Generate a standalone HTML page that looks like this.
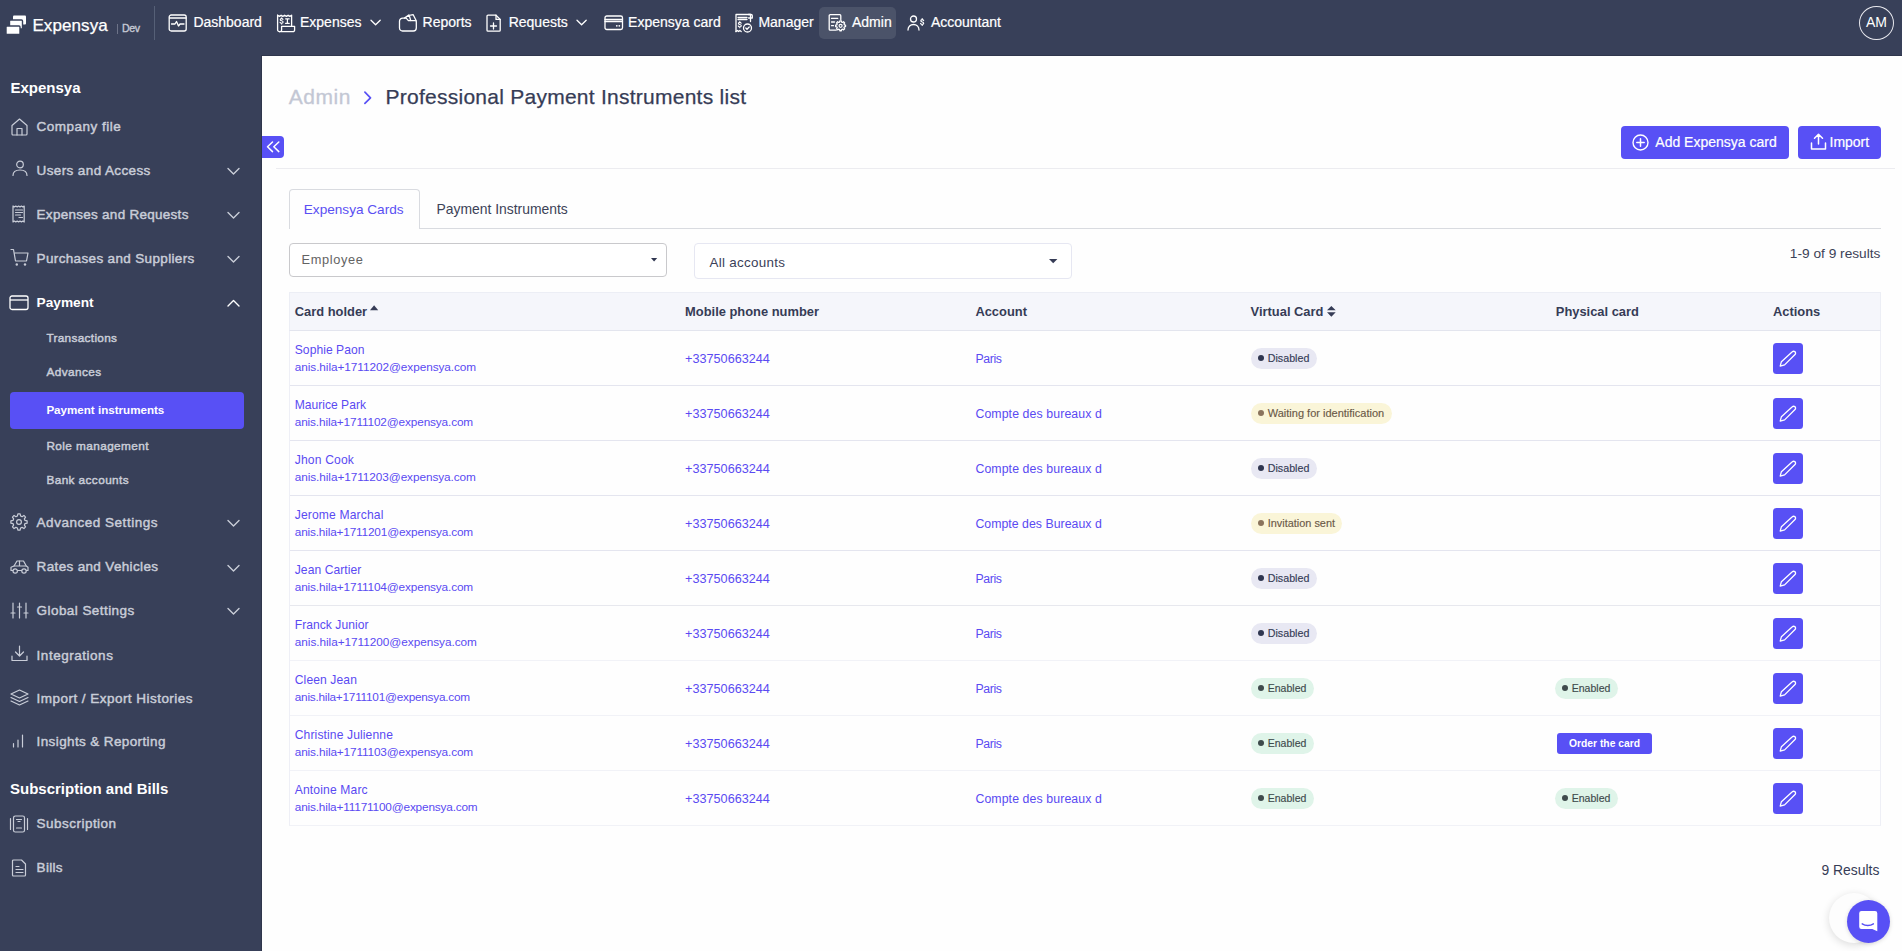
<!DOCTYPE html>
<html><head><meta charset="utf-8"><title>Professional Payment Instruments list</title>
<style>
html,body{margin:0;padding:0;}
body{width:1902px;height:951px;overflow:hidden;position:relative;background:#fefefe;font-family:"Liberation Sans", sans-serif;}
.t{position:absolute;line-height:1;white-space:nowrap;}
.b{position:absolute;box-sizing:border-box;}
.i{position:absolute;overflow:visible;}
</style></head><body>
<div class="b" style="left:0px;top:0px;width:1902px;height:56px;background:#384059;"></div>
<div class="b" style="left:261px;top:55px;width:1641px;height:1px;background:#2f364c;"></div>
<svg class="i" style="left:5px;top:14px;" width="22" height="22" viewBox="0 0 22 22" fill="none"><rect x="8" y="1.5" width="13" height="9" rx="1" fill="#fff"/><rect x="4.5" y="6" width="13" height="9" rx="1" fill="#fff" stroke="#384059" stroke-width="1.4"/><rect x="1" y="12" width="14" height="8.5" rx="1" fill="#fff" stroke="#384059" stroke-width="1.4"/></svg>
<div class="t" style="left:32.40px;top:17.11px;font-size:17px;color:#ffffff;font-weight:400;letter-spacing:0.1px;-webkit-text-stroke:0.25px #fff;">Expensya</div>
<div class="b" style="left:117px;top:23.5px;width:1px;height:10.5px;background:#6d7388;"></div>
<div class="t" style="left:122.00px;top:23.03px;font-size:10.6px;color:#c5c9d4;font-weight:400;letter-spacing:-0.375px;-webkit-text-stroke:0.35px #c5c9d4;">Dev</div>
<div class="b" style="left:154px;top:6px;width:1px;height:34px;background:#566077;"></div>
<div class="b" style="left:819px;top:7px;width:77px;height:32px;background:#4b5369;border-radius:5px;"></div>
<svg class="i" style="left:168px;top:14px;" width="20" height="18" viewBox="0 0 20 18" fill="none"><rect x="1.2" y="1" width="17" height="16" rx="2" stroke="#fff" stroke-width="1.3" stroke-linecap="round" stroke-linejoin="round"/><path d="M1.5 4h16.5" stroke="#fff" stroke-width="1.3" stroke-linecap="round" stroke-linejoin="round"/><path d="M3.5 10h3.5l1.5-2.5 2 4.5 1.5-2h4" stroke="#fff" stroke-width="1.3" stroke-linecap="round" stroke-linejoin="round"/></svg>
<div class="t" style="left:193.40px;top:15.35px;font-size:14px;color:#ffffff;font-weight:400;-webkit-text-stroke:0.2px #fff;">Dashboard</div>
<svg class="i" style="left:276px;top:13px;" width="20" height="20" viewBox="0 0 20 20" fill="none"><path d="M1.6 2.2l1.75 1.2 1.75-1.2 1.75 1.2 1.75-1.2 1.75 1.2 1.75-1.2 1.75 1.2 1.75-1.2V13.3" stroke="#fff" stroke-width="1.3" stroke-linecap="round" stroke-linejoin="round"/><path d="M1.6 2.2V16.8a1.9 1.9 0 0 0 1.9 1.9" stroke="#fff" stroke-width="1.3" stroke-linecap="round" stroke-linejoin="round"/><path d="M3.5 18.7h13.3a1.8 1.8 0 0 0 1.8-1.8v-3.6H5.6v3.6a1.8 1.8 0 0 1-1.8 1.8" stroke="#fff" stroke-width="1.3" stroke-linecap="round" stroke-linejoin="round"/><path d="M7 6.4c-.3-.5-.8-.8-1.4-.8-.8 0-1.4.4-1.4 1.1 0 1.4 2.9.8 2.9 2.3 0 .7-.7 1.2-1.5 1.2-.7 0-1.3-.3-1.6-.9M5.7 4.7v.9M5.7 10.2v.9" stroke="#fff" stroke-width="1.1" stroke-linecap="round"/><path d="M9.6 5.8h3.6M9.6 10.4h3.6M11.4 5.8v4.6" stroke="#fff" stroke-width="1.2" stroke-linecap="round"/></svg>
<div class="t" style="left:300.00px;top:15.35px;font-size:14px;color:#ffffff;font-weight:400;-webkit-text-stroke:0.2px #fff;">Expenses</div>
<svg class="i" style="left:369.5px;top:19px;" width="12" height="8" viewBox="0 0 12 8" fill="none"><path d="M1 1.2l4.6 4.6 4.6-4.6" stroke="#fff" stroke-width="1.3" stroke-linecap="round" stroke-linejoin="round"/></svg>
<svg class="i" style="left:398px;top:13px;" width="20" height="19" viewBox="0 0 20 19" fill="none"><path d="M1.5 8.3a3.2 3.2 0 0 1 3.2-3.2H8.2l2.2 2.5H17.3a1 1 0 0 1 1 1V15a3 3 0 0 1-3 3H4.5a3 3 0 0 1-3-3z" stroke="#fff" stroke-width="1.3" stroke-linecap="round" stroke-linejoin="round"/><path d="M6.5 5.1l4.6-3.2 1.6 5.6M12.6 2.2l2.6-.5 3 6" stroke="#fff" stroke-width="1.3" stroke-linecap="round" stroke-linejoin="round"/></svg>
<div class="t" style="left:422.60px;top:15.35px;font-size:14px;color:#ffffff;font-weight:400;-webkit-text-stroke:0.2px #fff;">Reports</div>
<svg class="i" style="left:486px;top:14px;" width="16" height="18" viewBox="0 0 16 18" fill="none"><path d="M2 1.2h8l4.2 4.2v10.8a1 1 0 0 1-1 1H2a1 1 0 0 1-1-1V2.2a1 1 0 0 1 1-1z" stroke="#fff" stroke-width="1.3" stroke-linecap="round" stroke-linejoin="round"/><path d="M10 1.2v4.2h4.2" stroke="#fff" stroke-width="1.3" stroke-linecap="round" stroke-linejoin="round"/><path d="M7.5 9v6M4.5 12h6" stroke="#fff" stroke-width="1.3" stroke-linecap="round" stroke-linejoin="round"/></svg>
<div class="t" style="left:508.70px;top:15.35px;font-size:14px;color:#ffffff;font-weight:400;-webkit-text-stroke:0.2px #fff;">Requests</div>
<svg class="i" style="left:575.5px;top:19px;" width="12" height="8" viewBox="0 0 12 8" fill="none"><path d="M1 1.2l4.6 4.6 4.6-4.6" stroke="#fff" stroke-width="1.3" stroke-linecap="round" stroke-linejoin="round"/></svg>
<svg class="i" style="left:604px;top:15px;" width="20" height="15" viewBox="0 0 20 15" fill="none"><rect x="1" y="1" width="17.5" height="13.5" rx="1.8" stroke="#fff" stroke-width="1.3" stroke-linecap="round" stroke-linejoin="round"/><path d="M1 4.5h17.5M1 6.5h17.5" stroke="#fff" stroke-width="1.3" stroke-linecap="round" stroke-linejoin="round"/><circle cx="12.8" cy="10.8" r="0.9" fill="#fff"/><circle cx="15.3" cy="10.8" r="0.9" fill="#fff"/></svg>
<div class="t" style="left:628.10px;top:15.35px;font-size:14px;color:#ffffff;font-weight:400;-webkit-text-stroke:0.2px #fff;">Expensya card</div>
<svg class="i" style="left:734px;top:13px;" width="20" height="20" viewBox="0 0 20 20" fill="none"><path d="M2 18.5V1.5h14.5v7" stroke="#fff" stroke-width="1.3" stroke-linecap="round" stroke-linejoin="round"/><path d="M14.5 1.5h2.5a1.3 1.3 0 0 1 1.3 1.3V5h-3.8" stroke="#fff" stroke-width="1.3" stroke-linecap="round" stroke-linejoin="round"/><path d="M4 4.5h9M4 6.5h9" stroke="#fff" stroke-width="1.3" stroke-linecap="round" stroke-linejoin="round"/><path d="M2 18.5l1.3-1 1.3 1 1.3-1 1.3 1" stroke="#fff" stroke-width="1.3" stroke-linecap="round" stroke-linejoin="round"/><circle cx="13.5" cy="15" r="4" stroke="#fff" stroke-width="1.3" stroke-linecap="round" stroke-linejoin="round"/><path d="M11.8 15l1.2 1.2 2.2-2.2" stroke="#fff" stroke-width="1.3" stroke-linecap="round" stroke-linejoin="round"/><path d="M7.2 10.2c-.3-.5-.8-.8-1.4-.8-.8 0-1.4.4-1.4 1 0 1.4 2.9.8 2.9 2.3 0 .7-.7 1.1-1.5 1.1-.7 0-1.3-.3-1.6-.9M5.8 8.5v.9M5.8 13.8v.9" stroke="#fff" stroke-width="1.1" stroke-linecap="round"/></svg>
<div class="t" style="left:758.40px;top:15.35px;font-size:14px;color:#ffffff;font-weight:400;-webkit-text-stroke:0.2px #fff;">Manager</div>
<svg class="i" style="left:828px;top:14px;" width="19" height="18" viewBox="0 0 19 18" fill="none"><path d="M8.2 16.2H2.2a1 1 0 0 1-1-1V1.7a1 1 0 0 1 1-1h9.6a1 1 0 0 1 1 1V5.5" stroke="#fff" stroke-width="1.3" stroke-linecap="round" stroke-linejoin="round"/><path d="M3.5 4.4h6.2M3.5 8h3M3.5 11.7h2" stroke="#fff" stroke-width="1.3" stroke-linecap="round" stroke-linejoin="round"/><path d="M11.59 8.03 L11.82 6.86 L13.38 6.86 L13.61 8.03 L14.55 8.42 L15.54 7.75 L16.65 8.86 L15.98 9.85 L16.37 10.79 L17.54 11.02 L17.54 12.58 L16.37 12.81 L15.98 13.75 L16.65 14.74 L15.54 15.85 L14.55 15.18 L13.61 15.57 L13.38 16.74 L11.82 16.74 L11.59 15.57 L10.65 15.18 L9.66 15.85 L8.55 14.74 L9.22 13.75 L8.83 12.81 L7.66 12.58 L7.66 11.02 L8.83 10.79 L9.22 9.85 L8.55 8.86 L9.66 7.75 L10.65 8.42Z" stroke="#fff" stroke-width="1.3" stroke-linejoin="round" fill="#4b5369"/><circle cx="12.6" cy="11.8" r="1.5" stroke="#fff" stroke-width="1.2"/></svg>
<div class="t" style="left:852.00px;top:15.35px;font-size:14px;color:#ffffff;font-weight:400;-webkit-text-stroke:0.2px #fff;">Admin</div>
<svg class="i" style="left:907px;top:15px;" width="18" height="16" viewBox="0 0 18 16" fill="none"><circle cx="6.5" cy="4" r="3" stroke="#fff" stroke-width="1.3" stroke-linecap="round" stroke-linejoin="round"/><path d="M1 15c0-3.2 2.4-5.5 5.5-5.5s5.5 2.3 5.5 5.5" stroke="#fff" stroke-width="1.3" stroke-linecap="round" stroke-linejoin="round"/><path d="M16.6 5.6c-.3-.6-.8-.9-1.4-.9-.8 0-1.4.5-1.4 1.1 0 1.5 2.9.8 2.9 2.4 0 .7-.7 1.2-1.5 1.2-.7 0-1.3-.4-1.6-.9M15.2 3.6v1M15.2 9.4v1" stroke="#fff" stroke-width="1.2" stroke-linecap="round"/></svg>
<div class="t" style="left:930.90px;top:15.35px;font-size:14px;color:#ffffff;font-weight:400;-webkit-text-stroke:0.2px #fff;">Accountant</div>
<div class="b" style="left:1859px;top:5.8px;width:35px;height:34.400000000000006px;border:1.3px solid #e8e8ee;border-radius:50%;"></div>
<div class="t" style="left:1876.50px;top:15.15px;font-size:14px;color:#ffffff;font-weight:400;transform:translateX(-50%);">AM</div><div class="b" style="left:0px;top:56px;width:262px;height:895px;background:#384059;"></div>
<div class="b" style="left:261px;top:56px;width:1px;height:895px;background:#2f364c;"></div>
<div class="t" style="left:10.50px;top:79.60px;font-size:15px;color:#ffffff;font-weight:700;">Expensya</div>
<svg class="i" style="left:11px;top:118px;" width="17" height="18" viewBox="0 0 17 18" fill="none"><path d="M1 7.5L8.5 1 16 7.5v8.5a1 1 0 0 1-1 1H2a1 1 0 0 1-1-1z" stroke="#c9cdd8" stroke-width="1.2" stroke-linecap="round" stroke-linejoin="round"/><path d="M6 17v-6.5h5V17" stroke="#c9cdd8" stroke-width="1.2" stroke-linecap="round" stroke-linejoin="round"/></svg>
<div class="t" style="left:36.60px;top:120.37px;font-size:13.5px;color:#c9cdd8;font-weight:400;letter-spacing:0.492px;-webkit-text-stroke:0.45px #c9cdd8;">Company file</div>
<svg class="i" style="left:12px;top:160px;" width="16" height="16" viewBox="0 0 16 16" fill="none"><circle cx="8" cy="4.5" r="3.3" stroke="#c9cdd8" stroke-width="1.2" stroke-linecap="round" stroke-linejoin="round"/><path d="M1 15.5c0-3.5 3-5.5 7-5.5s7 2 7 5.5" stroke="#c9cdd8" stroke-width="1.2" stroke-linecap="round" stroke-linejoin="round"/></svg>
<div class="t" style="left:36.60px;top:163.57px;font-size:13.5px;color:#c9cdd8;font-weight:400;letter-spacing:0.377px;-webkit-text-stroke:0.45px #c9cdd8;">Users and Access</div>
<svg class="i" style="left:226.5px;top:167px;" width="13" height="9" viewBox="0 0 13 9" fill="none"><path d="M1 1.5l5.5 5.5L12 1.5" stroke="#c9cdd8" stroke-width="1.4" stroke-linecap="round" stroke-linejoin="round"/></svg>
<svg class="i" style="left:12px;top:205px;" width="14" height="18" viewBox="0 0 14 18" fill="none"><path d="M1 1v16l1.4-1 1.4 1 1.4-1 1.4 1 1.4-1 1.4 1 1.4-1 1.4 1V1l-1.4 1-1.4-1-1.4 1-1.4-1-1.4 1-1.4-1-1.4 1z" stroke="#c9cdd8" stroke-width="1.2" stroke-linecap="round" stroke-linejoin="round"/><path d="M3.5 5h7M3.5 7.5h7M3.5 10h5M7 12.5h3.5" stroke="#c9cdd8" stroke-width="1.2" stroke-linecap="round" stroke-linejoin="round"/></svg>
<div class="t" style="left:36.60px;top:207.57px;font-size:13.5px;color:#c9cdd8;font-weight:400;letter-spacing:0.273px;-webkit-text-stroke:0.45px #c9cdd8;">Expenses and Requests</div>
<svg class="i" style="left:226.5px;top:211px;" width="13" height="9" viewBox="0 0 13 9" fill="none"><path d="M1 1.5l5.5 5.5L12 1.5" stroke="#c9cdd8" stroke-width="1.4" stroke-linecap="round" stroke-linejoin="round"/></svg>
<svg class="i" style="left:10px;top:248px;" width="19" height="19" viewBox="0 0 19 19" fill="none"><path d="M1 1.5h2.5l2 11.5h11l1.5-8H5" stroke="#c9cdd8" stroke-width="1.2" stroke-linecap="round" stroke-linejoin="round"/><circle cx="6.8" cy="16.5" r="1.2" fill="#c9cdd8"/><circle cx="15" cy="16.5" r="1.2" fill="#c9cdd8"/></svg>
<div class="t" style="left:36.60px;top:251.57px;font-size:13.5px;color:#c9cdd8;font-weight:400;letter-spacing:0.346px;-webkit-text-stroke:0.45px #c9cdd8;">Purchases and Suppliers</div>
<svg class="i" style="left:226.5px;top:255px;" width="13" height="9" viewBox="0 0 13 9" fill="none"><path d="M1 1.5l5.5 5.5L12 1.5" stroke="#c9cdd8" stroke-width="1.4" stroke-linecap="round" stroke-linejoin="round"/></svg>
<svg class="i" style="left:9px;top:295px;" width="20" height="16" viewBox="0 0 20 16" fill="none"><rect x="1" y="1" width="18" height="13.5" rx="2" stroke="#fff" stroke-width="1.3"/><path d="M1 5h18" stroke="#fff" stroke-width="1.3"/></svg>
<div class="t" style="left:36.60px;top:295.90px;font-size:13.7px;color:#ffffff;font-weight:700;">Payment</div>
<svg class="i" style="left:226.5px;top:298.5px;" width="13" height="9" viewBox="0 0 13 9" fill="none"><path d="M1 7l5.5-5.5L12 7" stroke="#fff" stroke-width="1.4" stroke-linecap="round" stroke-linejoin="round"/></svg>
<div class="b" style="left:10px;top:392px;width:234px;height:37px;background:#5850f5;border-radius:4px;"></div>
<div class="t" style="left:46.40px;top:333.21px;font-size:11.8px;color:#c9cdd8;font-weight:400;letter-spacing:0.317px;-webkit-text-stroke:0.45px #c9cdd8;">Transactions</div>
<div class="t" style="left:46.40px;top:367.11px;font-size:11.8px;color:#c9cdd8;font-weight:400;letter-spacing:0.425px;-webkit-text-stroke:0.45px #c9cdd8;">Advances</div>
<div class="t" style="left:46.40px;top:404.18px;font-size:11.6px;color:#fff;font-weight:700;">Payment instruments</div>
<div class="t" style="left:46.40px;top:441.11px;font-size:11.8px;color:#c9cdd8;font-weight:400;letter-spacing:0.412px;-webkit-text-stroke:0.45px #c9cdd8;">Role management</div>
<div class="t" style="left:46.40px;top:474.61px;font-size:11.8px;color:#c9cdd8;font-weight:400;letter-spacing:0.408px;-webkit-text-stroke:0.45px #c9cdd8;">Bank accounts</div>
<svg class="i" style="left:10px;top:513px;" width="18" height="18" viewBox="0 0 18 18" fill="none"><path d="M7.40 3.01 L7.86 0.88 L10.14 0.88 L10.60 3.01 L12.10 3.63 L13.93 2.45 L15.55 4.07 L14.37 5.90 L14.99 7.40 L17.12 7.86 L17.12 10.14 L14.99 10.60 L14.37 12.10 L15.55 13.93 L13.93 15.55 L12.10 14.37 L10.60 14.99 L10.14 17.12 L7.86 17.12 L7.40 14.99 L5.90 14.37 L4.07 15.55 L2.45 13.93 L3.63 12.10 L3.01 10.60 L0.88 10.14 L0.88 7.86 L3.01 7.40 L3.63 5.90 L2.45 4.07 L4.07 2.45 L5.90 3.63Z" stroke="#c9cdd8" stroke-width="1.2" stroke-linecap="round" stroke-linejoin="round"/><circle cx="9" cy="9" r="2.4" stroke="#c9cdd8" stroke-width="1.2" stroke-linecap="round" stroke-linejoin="round"/></svg>
<div class="t" style="left:36.60px;top:515.97px;font-size:13.5px;color:#c9cdd8;font-weight:400;letter-spacing:0.520px;-webkit-text-stroke:0.45px #c9cdd8;">Advanced Settings</div>
<svg class="i" style="left:226.5px;top:519.4px;" width="13" height="9" viewBox="0 0 13 9" fill="none"><path d="M1 1.5l5.5 5.5L12 1.5" stroke="#c9cdd8" stroke-width="1.4" stroke-linecap="round" stroke-linejoin="round"/></svg>
<svg class="i" style="left:9.5px;top:560px;" width="19" height="15" viewBox="0 0 19 15" fill="none"><path d="M1 10.5V7.2l3-1.2 3-5h6.5l2.8 5 1.7 1.2v3.3z" stroke="#c9cdd8" stroke-width="1.2" stroke-linecap="round" stroke-linejoin="round"/><path d="M4 6h12M9.5 1.2V6" stroke="#c9cdd8" stroke-width="1.2" stroke-linecap="round" stroke-linejoin="round"/><circle cx="5.2" cy="11" r="2.2" fill="#384059" stroke="#c9cdd8" stroke-width="1.2" stroke-linecap="round" stroke-linejoin="round"/><circle cx="14" cy="11" r="2.2" fill="#384059" stroke="#c9cdd8" stroke-width="1.2" stroke-linecap="round" stroke-linejoin="round"/></svg>
<div class="t" style="left:36.60px;top:560.27px;font-size:13.5px;color:#c9cdd8;font-weight:400;letter-spacing:0.343px;-webkit-text-stroke:0.45px #c9cdd8;">Rates and Vehicles</div>
<svg class="i" style="left:226.5px;top:563.7px;" width="13" height="9" viewBox="0 0 13 9" fill="none"><path d="M1 1.5l5.5 5.5L12 1.5" stroke="#c9cdd8" stroke-width="1.4" stroke-linecap="round" stroke-linejoin="round"/></svg>
<svg class="i" style="left:10px;top:602px;" width="19" height="17" viewBox="0 0 19 17" fill="none"><path d="M3 1v15M9.5 1v15M16 1v15" stroke="#c9cdd8" stroke-width="1.2" stroke-linecap="round" stroke-linejoin="round"/><path d="M1 11h4M7.5 5h4M14 11h4" stroke="#c9cdd8" stroke-width="1.2" stroke-linecap="round" stroke-linejoin="round"/></svg>
<div class="t" style="left:36.60px;top:603.97px;font-size:13.5px;color:#c9cdd8;font-weight:400;letter-spacing:0.432px;-webkit-text-stroke:0.45px #c9cdd8;">Global Settings</div>
<svg class="i" style="left:226.5px;top:607.4px;" width="13" height="9" viewBox="0 0 13 9" fill="none"><path d="M1 1.5l5.5 5.5L12 1.5" stroke="#c9cdd8" stroke-width="1.4" stroke-linecap="round" stroke-linejoin="round"/></svg>
<svg class="i" style="left:11px;top:645px;" width="17" height="17" viewBox="0 0 17 17" fill="none"><path d="M8.5 1v10M4.5 7l4 4 4-4" stroke="#c9cdd8" stroke-width="1.2" stroke-linecap="round" stroke-linejoin="round"/><path d="M1 11v4.5h15V11" stroke="#c9cdd8" stroke-width="1.2" stroke-linecap="round" stroke-linejoin="round"/></svg>
<div class="t" style="left:36.60px;top:648.57px;font-size:13.5px;color:#c9cdd8;font-weight:400;letter-spacing:0.523px;-webkit-text-stroke:0.45px #c9cdd8;">Integrations</div>
<svg class="i" style="left:10px;top:689px;" width="19" height="17" viewBox="0 0 19 17" fill="none"><path d="M9.5 1L1 5l8.5 4L18 5z" stroke="#c9cdd8" stroke-width="1.2" stroke-linecap="round" stroke-linejoin="round"/><path d="M1 8.5l8.5 4 8.5-4M1 12l8.5 4 8.5-4" stroke="#c9cdd8" stroke-width="1.2" stroke-linecap="round" stroke-linejoin="round"/></svg>
<div class="t" style="left:36.60px;top:692.37px;font-size:13.5px;color:#c9cdd8;font-weight:400;letter-spacing:0.463px;-webkit-text-stroke:0.45px #c9cdd8;">Import / Export Histories</div>
<svg class="i" style="left:12px;top:734px;" width="12" height="14" viewBox="0 0 12 14" fill="none"><path d="M1.5 13V9.5M6 13V6M10.5 13V1" stroke="#c9cdd8" stroke-width="1.2" stroke-linecap="round" stroke-linejoin="round"/></svg>
<div class="t" style="left:36.60px;top:735.27px;font-size:13.5px;color:#c9cdd8;font-weight:400;letter-spacing:0.381px;-webkit-text-stroke:0.45px #c9cdd8;">Insights &amp; Reporting</div>
<div class="t" style="left:10.00px;top:781.30px;font-size:15px;color:#ffffff;font-weight:700;">Subscription and Bills</div>
<svg class="i" style="left:9px;top:815px;" width="20" height="18" viewBox="0 0 20 18" fill="none"><rect x="4.5" y="1" width="11" height="16" rx="1.8" stroke="#c9cdd8" stroke-width="1.2" stroke-linecap="round" stroke-linejoin="round"/><path d="M1.5 3.5v11M18.5 3.5v11" stroke="#c9cdd8" stroke-width="1.2" stroke-linecap="round" stroke-linejoin="round"/><path d="M7.5 4.5h5M9 6.5h2M7.5 13h5" stroke="#c9cdd8" stroke-width="1.2" stroke-linecap="round" stroke-linejoin="round"/></svg>
<div class="t" style="left:36.60px;top:817.27px;font-size:13.5px;color:#c9cdd8;font-weight:400;letter-spacing:0.473px;-webkit-text-stroke:0.45px #c9cdd8;">Subscription</div>
<svg class="i" style="left:12px;top:859px;" width="15" height="18" viewBox="0 0 15 18" fill="none"><path d="M1.5 1h8l4 4v11a1 1 0 0 1-1 1h-11a1 1 0 0 1-1-1V2a1 1 0 0 1 1-1z" stroke="#c9cdd8" stroke-width="1.2" stroke-linecap="round" stroke-linejoin="round"/><path d="M4 7.5h3M4 10.5h7M4 13.5h7" stroke="#c9cdd8" stroke-width="1.2" stroke-linecap="round" stroke-linejoin="round"/></svg>
<div class="t" style="left:36.60px;top:861.37px;font-size:13.5px;color:#c9cdd8;font-weight:400;letter-spacing:0.287px;-webkit-text-stroke:0.45px #c9cdd8;">Bills</div><div class="t" style="left:288.80px;top:86.22px;font-size:21px;color:#c3c7d4;font-weight:400;letter-spacing:0.518px;-webkit-text-stroke:0.3px #c3c7d4;">Admin</div>
<svg class="i" style="left:363px;top:90px;" width="10" height="15" viewBox="0 0 10 15" fill="none"><path d="M1.9 2.2l5.6 5.6-5.6 5.6" stroke="#5850f5" stroke-width="1.7" stroke-linecap="round" stroke-linejoin="round"/></svg>
<div class="t" style="left:385.50px;top:86.22px;font-size:21px;color:#363c56;font-weight:400;letter-spacing:0.255px;-webkit-text-stroke:0.25px #363c56;">Professional Payment Instruments list</div>
<div class="b" style="left:262px;top:136px;width:22px;height:22px;background:#5850f5;border-radius:0 4px 4px 0;"></div>
<svg class="i" style="left:266px;top:141px;" width="15" height="12" viewBox="0 0 15 12" fill="none"><path d="M6.5 1L1.5 5.8l5 4.8M12.8 1l-5 4.8 5 4.8" stroke="#fff" stroke-width="1.5" stroke-linecap="round" stroke-linejoin="round"/></svg>
<div class="b" style="left:276px;top:168px;width:1619px;height:1px;background:#ececf0;"></div>
<div class="b" style="left:1621px;top:126px;width:168px;height:33px;background:#5850f5;border-radius:4px;"></div>
<svg class="i" style="left:1632px;top:134px;" width="17" height="17" viewBox="0 0 17 17" fill="none"><circle cx="8.5" cy="8.5" r="7.5" stroke="#fff" stroke-width="1.4"/><path d="M8.5 4.8v7.4M4.8 8.5h7.4" stroke="#fff" stroke-width="1.5" stroke-linecap="round"/></svg>
<div class="t" style="left:1655.30px;top:135.45px;font-size:14px;color:#fff;font-weight:400;-webkit-text-stroke:0.2px #fff;">Add Expensya card</div>
<div class="b" style="left:1798px;top:126px;width:83px;height:33px;background:#5850f5;border-radius:4px;"></div>
<svg class="i" style="left:1810px;top:133px;" width="17" height="18" viewBox="0 0 17 18" fill="none"><path d="M8.5 11V1.5M4.5 5.2l4-4 4 4" stroke="#fff" stroke-width="1.5" stroke-linecap="round" stroke-linejoin="round"/><path d="M1.5 10v6h14v-6" stroke="#fff" stroke-width="1.5" stroke-linecap="round" stroke-linejoin="round"/></svg>
<div class="t" style="left:1829.50px;top:135.45px;font-size:14px;color:#fff;font-weight:400;-webkit-text-stroke:0.2px #fff;">Import</div>
<div class="b" style="left:289px;top:189px;width:131px;height:40px;border:1px solid #d9dbe0;border-bottom:none;border-radius:4px 4px 0 0;background:#fefefe;"></div>
<div class="b" style="left:420px;top:228px;width:1461px;height:1px;background:#d9dbe0;"></div>
<div class="t" style="left:303.80px;top:202.99px;font-size:13.6px;color:#5a4ff3;font-weight:400;">Expensya Cards</div>
<div class="t" style="left:436.50px;top:202.73px;font-size:13.9px;color:#3c4257;font-weight:400;">Payment Instruments</div>
<div class="b" style="left:289px;top:243px;width:378px;height:34px;border:1px solid #c9c9cc;border-radius:4px;background:#fff;"></div>
<div class="t" style="left:301.60px;top:253.76px;font-size:12.8px;color:#636363;font-weight:400;letter-spacing:0.611px;">Employee</div>
<svg class="i" style="left:651px;top:258px;" width="8" height="5" viewBox="0 0 8 5" fill="none"><path d="M0 0h6.2L3.1 3.4z" fill="#2f3650"/></svg>
<div class="b" style="left:694px;top:243px;width:378px;height:36px;border:1px solid #e6e7f2;border-radius:4px;background:#fff;"></div>
<div class="t" style="left:709.60px;top:255.96px;font-size:13.4px;color:#3a4058;font-weight:400;letter-spacing:0.286px;">All accounts</div>
<svg class="i" style="left:1049px;top:259px;" width="9" height="5" viewBox="0 0 9 5" fill="none"><path d="M0 0h8.4L4.2 4.3z" fill="#363c56"/></svg>
<div class="t" style="right:21.60px;top:247.20px;font-size:13.7px;color:#3c4257;font-weight:400;">1-9 of 9 results</div>
<div class="b" style="left:289px;top:292px;width:1592px;height:534px;border:1px solid #eeeff6;border-bottom-color:#f1f2f7;"></div>
<div class="b" style="left:289px;top:292px;width:1592px;height:39px;background:#f5f6fb;border:1px solid #eceef5;border-bottom:1px solid #e3e5ee;"></div>
<div class="t" style="left:294.75px;top:305.68px;font-size:12.9px;color:#363c56;font-weight:700;">Card holder</div>
<svg class="i" style="left:370px;top:305px;" width="9" height="6" viewBox="0 0 9 6" fill="none"><path d="M0 5.2h8.2L4.1 0.2z" fill="#363c56"/></svg>
<div class="t" style="left:685.10px;top:305.68px;font-size:12.9px;color:#363c56;font-weight:700;">Mobile phone number</div>
<div class="t" style="left:975.40px;top:305.68px;font-size:12.9px;color:#363c56;font-weight:700;">Account</div>
<div class="t" style="left:1250.60px;top:305.68px;font-size:12.9px;color:#363c56;font-weight:700;">Virtual Card</div>
<svg class="i" style="left:1327px;top:305.6px;" width="9" height="11" viewBox="0 0 9 11" fill="none"><path d="M0 4.3h8.7L4.35 0z M0 6.3h8.7L4.35 10.8z" fill="#363c56"/></svg>
<div class="t" style="left:1555.80px;top:305.68px;font-size:12.9px;color:#363c56;font-weight:700;">Physical card</div>
<div class="t" style="left:1773.00px;top:305.68px;font-size:12.9px;color:#363c56;font-weight:700;">Actions</div>
<div class="t" style="left:294.75px;top:343.76px;font-size:12.1px;color:#5a4af2;font-weight:400;letter-spacing:0.045px;">Sophie Paon</div>
<div class="t" style="left:294.75px;top:361.91px;font-size:11.8px;color:#5a4af2;font-weight:400;letter-spacing:-0.063px;">anis.hila+1711202@expensya.com</div>
<div class="t" style="left:685.10px;top:352.59px;font-size:12.65px;color:#5a4af2;font-weight:400;">+33750663244</div>
<div class="t" style="left:975.40px;top:352.89px;font-size:12.3px;color:#5a4af2;font-weight:400;letter-spacing:-0.381px;">Paris</div>
<div class="b" style="left:1251px;top:348.00px;height:21px;padding:0 7.5px 0 7px;border-radius:11px;background:#e8e8f3;display:flex;align-items:center;font-size:10.7px;color:#363c56;line-height:1;white-space:nowrap;"><span style="display:inline-block;width:6.2px;height:6.2px;border-radius:50%;background:#2f3650;margin-right:3.6px;position:relative;top:-0.4px;"></span><span style="position:relative;top:-0.4px;-webkit-text-stroke:0.15px #363c56;">Disabled</span></div>
<div class="b" style="left:1773px;top:343.0px;width:30px;height:31.0px;background:#5850f5;border-radius:3.5px;"></div>
<svg class="i" style="left:1778px;top:349.8px;" width="19" height="18" viewBox="0 0 19 18" fill="none"><path d="M14.3 1.8a1.9 1.9 0 0 1 2.7 2.7L6.6 14.9l-4.4 1.2 1.2-4.4z" stroke="#fff" stroke-width="1.3" stroke-linejoin="round"/></svg>
<div class="b" style="left:290px;top:385px;width:1590px;height:1px;background:#e4e5ef;"></div>
<div class="t" style="left:294.75px;top:398.76px;font-size:12.1px;color:#5a4af2;font-weight:400;letter-spacing:-0.003px;">Maurice Park</div>
<div class="t" style="left:294.75px;top:416.91px;font-size:11.8px;color:#5a4af2;font-weight:400;letter-spacing:-0.136px;">anis.hila+1711102@expensya.com</div>
<div class="t" style="left:685.10px;top:407.59px;font-size:12.65px;color:#5a4af2;font-weight:400;">+33750663244</div>
<div class="t" style="left:975.40px;top:407.89px;font-size:12.3px;color:#5a4af2;font-weight:400;letter-spacing:0.108px;">Compte des bureaux d</div>
<div class="b" style="left:1251px;top:403.00px;height:21px;padding:0 7.5px 0 7px;border-radius:11px;background:#faf5d8;display:flex;align-items:center;font-size:11.0px;color:#6b5a48;line-height:1;white-space:nowrap;"><span style="display:inline-block;width:6.2px;height:6.2px;border-radius:50%;background:#8a735c;margin-right:3.6px;position:relative;top:-0.4px;"></span><span style="position:relative;top:-0.4px;-webkit-text-stroke:0.15px #6b5a48;">Waiting for identification</span></div>
<div class="b" style="left:1773px;top:398.0px;width:30px;height:31.0px;background:#5850f5;border-radius:3.5px;"></div>
<svg class="i" style="left:1778px;top:404.8px;" width="19" height="18" viewBox="0 0 19 18" fill="none"><path d="M14.3 1.8a1.9 1.9 0 0 1 2.7 2.7L6.6 14.9l-4.4 1.2 1.2-4.4z" stroke="#fff" stroke-width="1.3" stroke-linejoin="round"/></svg>
<div class="b" style="left:290px;top:440px;width:1590px;height:1px;background:#e4e5ef;"></div>
<div class="t" style="left:294.75px;top:453.76px;font-size:12.1px;color:#5a4af2;font-weight:400;letter-spacing:0.163px;">Jhon Cook</div>
<div class="t" style="left:294.75px;top:471.91px;font-size:11.8px;color:#5a4af2;font-weight:400;letter-spacing:-0.073px;">anis.hila+1711203@expensya.com</div>
<div class="t" style="left:685.10px;top:462.59px;font-size:12.65px;color:#5a4af2;font-weight:400;">+33750663244</div>
<div class="t" style="left:975.40px;top:462.89px;font-size:12.3px;color:#5a4af2;font-weight:400;letter-spacing:0.108px;">Compte des bureaux d</div>
<div class="b" style="left:1251px;top:458.00px;height:21px;padding:0 7.5px 0 7px;border-radius:11px;background:#e8e8f3;display:flex;align-items:center;font-size:10.7px;color:#363c56;line-height:1;white-space:nowrap;"><span style="display:inline-block;width:6.2px;height:6.2px;border-radius:50%;background:#2f3650;margin-right:3.6px;position:relative;top:-0.4px;"></span><span style="position:relative;top:-0.4px;-webkit-text-stroke:0.15px #363c56;">Disabled</span></div>
<div class="b" style="left:1773px;top:453.0px;width:30px;height:31.0px;background:#5850f5;border-radius:3.5px;"></div>
<svg class="i" style="left:1778px;top:459.8px;" width="19" height="18" viewBox="0 0 19 18" fill="none"><path d="M14.3 1.8a1.9 1.9 0 0 1 2.7 2.7L6.6 14.9l-4.4 1.2 1.2-4.4z" stroke="#fff" stroke-width="1.3" stroke-linejoin="round"/></svg>
<div class="b" style="left:290px;top:495px;width:1590px;height:1px;background:#e4e5ef;"></div>
<div class="t" style="left:294.75px;top:508.76px;font-size:12.1px;color:#5a4af2;font-weight:400;letter-spacing:0.146px;">Jerome Marchal</div>
<div class="t" style="left:294.75px;top:526.91px;font-size:11.8px;color:#5a4af2;font-weight:400;letter-spacing:-0.166px;">anis.hila+1711201@expensya.com</div>
<div class="t" style="left:685.10px;top:517.59px;font-size:12.65px;color:#5a4af2;font-weight:400;">+33750663244</div>
<div class="t" style="left:975.40px;top:517.89px;font-size:12.3px;color:#5a4af2;font-weight:400;letter-spacing:0.036px;">Compte des Bureaux d</div>
<div class="b" style="left:1251px;top:513.00px;height:21px;padding:0 7.5px 0 7px;border-radius:11px;background:#faf5d8;display:flex;align-items:center;font-size:10.9px;color:#6b5a48;line-height:1;white-space:nowrap;"><span style="display:inline-block;width:6.2px;height:6.2px;border-radius:50%;background:#8a735c;margin-right:3.6px;position:relative;top:-0.4px;"></span><span style="position:relative;top:-0.4px;-webkit-text-stroke:0.15px #6b5a48;">Invitation sent</span></div>
<div class="b" style="left:1773px;top:508.0px;width:30px;height:31.0px;background:#5850f5;border-radius:3.5px;"></div>
<svg class="i" style="left:1778px;top:514.8px;" width="19" height="18" viewBox="0 0 19 18" fill="none"><path d="M14.3 1.8a1.9 1.9 0 0 1 2.7 2.7L6.6 14.9l-4.4 1.2 1.2-4.4z" stroke="#fff" stroke-width="1.3" stroke-linejoin="round"/></svg>
<div class="b" style="left:290px;top:550px;width:1590px;height:1px;background:#e4e5ef;"></div>
<div class="t" style="left:294.75px;top:563.76px;font-size:12.1px;color:#5a4af2;font-weight:400;letter-spacing:0.067px;">Jean Cartier</div>
<div class="t" style="left:294.75px;top:581.91px;font-size:11.8px;color:#5a4af2;font-weight:400;letter-spacing:-0.136px;">anis.hila+1711104@expensya.com</div>
<div class="t" style="left:685.10px;top:572.59px;font-size:12.65px;color:#5a4af2;font-weight:400;">+33750663244</div>
<div class="t" style="left:975.40px;top:572.89px;font-size:12.3px;color:#5a4af2;font-weight:400;letter-spacing:-0.381px;">Paris</div>
<div class="b" style="left:1251px;top:568.00px;height:21px;padding:0 7.5px 0 7px;border-radius:11px;background:#e8e8f3;display:flex;align-items:center;font-size:10.7px;color:#363c56;line-height:1;white-space:nowrap;"><span style="display:inline-block;width:6.2px;height:6.2px;border-radius:50%;background:#2f3650;margin-right:3.6px;position:relative;top:-0.4px;"></span><span style="position:relative;top:-0.4px;-webkit-text-stroke:0.15px #363c56;">Disabled</span></div>
<div class="b" style="left:1773px;top:563.0px;width:30px;height:31.0px;background:#5850f5;border-radius:3.5px;"></div>
<svg class="i" style="left:1778px;top:569.8px;" width="19" height="18" viewBox="0 0 19 18" fill="none"><path d="M14.3 1.8a1.9 1.9 0 0 1 2.7 2.7L6.6 14.9l-4.4 1.2 1.2-4.4z" stroke="#fff" stroke-width="1.3" stroke-linejoin="round"/></svg>
<div class="b" style="left:290px;top:605px;width:1590px;height:1px;background:#e7e8ee;"></div>
<div class="t" style="left:294.75px;top:618.76px;font-size:12.1px;color:#5a4af2;font-weight:400;letter-spacing:0.038px;">Franck Junior</div>
<div class="t" style="left:294.75px;top:636.91px;font-size:11.8px;color:#5a4af2;font-weight:400;letter-spacing:-0.038px;">anis.hila+1711200@expensya.com</div>
<div class="t" style="left:685.10px;top:627.59px;font-size:12.65px;color:#5a4af2;font-weight:400;">+33750663244</div>
<div class="t" style="left:975.40px;top:627.89px;font-size:12.3px;color:#5a4af2;font-weight:400;letter-spacing:-0.381px;">Paris</div>
<div class="b" style="left:1251px;top:623.00px;height:21px;padding:0 7.5px 0 7px;border-radius:11px;background:#e8e8f3;display:flex;align-items:center;font-size:10.7px;color:#363c56;line-height:1;white-space:nowrap;"><span style="display:inline-block;width:6.2px;height:6.2px;border-radius:50%;background:#2f3650;margin-right:3.6px;position:relative;top:-0.4px;"></span><span style="position:relative;top:-0.4px;-webkit-text-stroke:0.15px #363c56;">Disabled</span></div>
<div class="b" style="left:1773px;top:618.0px;width:30px;height:31.0px;background:#5850f5;border-radius:3.5px;"></div>
<svg class="i" style="left:1778px;top:624.8px;" width="19" height="18" viewBox="0 0 19 18" fill="none"><path d="M14.3 1.8a1.9 1.9 0 0 1 2.7 2.7L6.6 14.9l-4.4 1.2 1.2-4.4z" stroke="#fff" stroke-width="1.3" stroke-linejoin="round"/></svg>
<div class="b" style="left:290px;top:660px;width:1590px;height:1px;background:#f1f2f7;"></div>
<div class="t" style="left:294.75px;top:673.76px;font-size:12.1px;color:#5a4af2;font-weight:400;letter-spacing:0.104px;">Cleen Jean</div>
<div class="t" style="left:294.75px;top:691.91px;font-size:11.8px;color:#5a4af2;font-weight:400;letter-spacing:-0.243px;">anis.hila+1711101@expensya.com</div>
<div class="t" style="left:685.10px;top:682.59px;font-size:12.65px;color:#5a4af2;font-weight:400;">+33750663244</div>
<div class="t" style="left:975.40px;top:682.89px;font-size:12.3px;color:#5a4af2;font-weight:400;letter-spacing:-0.381px;">Paris</div>
<div class="b" style="left:1251px;top:678.00px;height:21px;padding:0 7.5px 0 7px;border-radius:11px;background:#dff4e9;display:flex;align-items:center;font-size:10.5px;color:#3e4a4c;line-height:1;white-space:nowrap;"><span style="display:inline-block;width:6.2px;height:6.2px;border-radius:50%;background:#3e4a4c;margin-right:3.6px;position:relative;top:-0.4px;"></span><span style="position:relative;top:-0.4px;-webkit-text-stroke:0.15px #3e4a4c;">Enabled</span></div>
<div class="b" style="left:1555px;top:678.00px;height:21px;padding:0 7.5px 0 7px;border-radius:11px;background:#dff4e9;display:flex;align-items:center;font-size:10.5px;color:#3e4a4c;line-height:1;white-space:nowrap;"><span style="display:inline-block;width:6.2px;height:6.2px;border-radius:50%;background:#3e4a4c;margin-right:3.6px;position:relative;top:-0.4px;"></span><span style="position:relative;top:-0.4px;-webkit-text-stroke:0.15px #3e4a4c;">Enabled</span></div>
<div class="b" style="left:1773px;top:673.0px;width:30px;height:31.0px;background:#5850f5;border-radius:3.5px;"></div>
<svg class="i" style="left:1778px;top:679.8px;" width="19" height="18" viewBox="0 0 19 18" fill="none"><path d="M14.3 1.8a1.9 1.9 0 0 1 2.7 2.7L6.6 14.9l-4.4 1.2 1.2-4.4z" stroke="#fff" stroke-width="1.3" stroke-linejoin="round"/></svg>
<div class="b" style="left:290px;top:715px;width:1590px;height:1px;background:#f1f2f7;"></div>
<div class="t" style="left:294.75px;top:728.76px;font-size:12.1px;color:#5a4af2;font-weight:400;letter-spacing:0.116px;">Christine Julienne</div>
<div class="t" style="left:294.75px;top:746.91px;font-size:11.8px;color:#5a4af2;font-weight:400;letter-spacing:-0.136px;">anis.hila+1711103@expensya.com</div>
<div class="t" style="left:685.10px;top:737.59px;font-size:12.65px;color:#5a4af2;font-weight:400;">+33750663244</div>
<div class="t" style="left:975.40px;top:737.89px;font-size:12.3px;color:#5a4af2;font-weight:400;letter-spacing:-0.381px;">Paris</div>
<div class="b" style="left:1251px;top:733.00px;height:21px;padding:0 7.5px 0 7px;border-radius:11px;background:#dff4e9;display:flex;align-items:center;font-size:10.5px;color:#3e4a4c;line-height:1;white-space:nowrap;"><span style="display:inline-block;width:6.2px;height:6.2px;border-radius:50%;background:#3e4a4c;margin-right:3.6px;position:relative;top:-0.4px;"></span><span style="position:relative;top:-0.4px;-webkit-text-stroke:0.15px #3e4a4c;">Enabled</span></div>
<div class="b" style="left:1557px;top:733.0px;width:95px;height:20.799999999999955px;background:#5850f5;border-radius:3px;"></div>
<div class="t" style="left:1604.50px;top:738.68px;font-size:10.3px;color:#fff;font-weight:700;transform:translateX(-50%);">Order the card</div>
<div class="b" style="left:1773px;top:728.0px;width:30px;height:31.0px;background:#5850f5;border-radius:3.5px;"></div>
<svg class="i" style="left:1778px;top:734.8px;" width="19" height="18" viewBox="0 0 19 18" fill="none"><path d="M14.3 1.8a1.9 1.9 0 0 1 2.7 2.7L6.6 14.9l-4.4 1.2 1.2-4.4z" stroke="#fff" stroke-width="1.3" stroke-linejoin="round"/></svg>
<div class="b" style="left:290px;top:770px;width:1590px;height:1px;background:#f1f2f7;"></div>
<div class="t" style="left:294.75px;top:783.76px;font-size:12.1px;color:#5a4af2;font-weight:400;letter-spacing:0.151px;">Antoine Marc</div>
<div class="t" style="left:294.75px;top:801.91px;font-size:11.8px;color:#5a4af2;font-weight:400;letter-spacing:-0.171px;">anis.hila+11171100@expensya.com</div>
<div class="t" style="left:685.10px;top:792.59px;font-size:12.65px;color:#5a4af2;font-weight:400;">+33750663244</div>
<div class="t" style="left:975.40px;top:792.89px;font-size:12.3px;color:#5a4af2;font-weight:400;letter-spacing:0.108px;">Compte des bureaux d</div>
<div class="b" style="left:1251px;top:788.00px;height:21px;padding:0 7.5px 0 7px;border-radius:11px;background:#dff4e9;display:flex;align-items:center;font-size:10.5px;color:#3e4a4c;line-height:1;white-space:nowrap;"><span style="display:inline-block;width:6.2px;height:6.2px;border-radius:50%;background:#3e4a4c;margin-right:3.6px;position:relative;top:-0.4px;"></span><span style="position:relative;top:-0.4px;-webkit-text-stroke:0.15px #3e4a4c;">Enabled</span></div>
<div class="b" style="left:1555px;top:788.00px;height:21px;padding:0 7.5px 0 7px;border-radius:11px;background:#dff4e9;display:flex;align-items:center;font-size:10.5px;color:#3e4a4c;line-height:1;white-space:nowrap;"><span style="display:inline-block;width:6.2px;height:6.2px;border-radius:50%;background:#3e4a4c;margin-right:3.6px;position:relative;top:-0.4px;"></span><span style="position:relative;top:-0.4px;-webkit-text-stroke:0.15px #3e4a4c;">Enabled</span></div>
<div class="b" style="left:1773px;top:783.0px;width:30px;height:31.0px;background:#5850f5;border-radius:3.5px;"></div>
<svg class="i" style="left:1778px;top:789.8px;" width="19" height="18" viewBox="0 0 19 18" fill="none"><path d="M14.3 1.8a1.9 1.9 0 0 1 2.7 2.7L6.6 14.9l-4.4 1.2 1.2-4.4z" stroke="#fff" stroke-width="1.3" stroke-linejoin="round"/></svg>
<div class="t" style="right:22.60px;top:864.23px;font-size:13.9px;color:#363c56;font-weight:400;">9 Results</div>
<div class="b" style="left:1829px;top:893px;width:50px;height:50px;background:#fdfdfd;border-radius:50%;box-shadow:0 2px 8px rgba(0,0,0,0.14);"></div>
<div class="b" style="left:1847px;top:899.5px;width:43px;height:43.0px;background:#5850f5;border-radius:50%;box-shadow:0 1px 4px rgba(0,0,0,0.15);"></div>
<svg class="i" style="left:1859px;top:910px;" width="20" height="22" viewBox="0 0 20 22" fill="none"><path d="M2.5 1h13.5a2.3 2.3 0 0 1 2.3 2.3V21.3l-5-2.2H2.5A2.3 2.3 0 0 1 .2 16.8V3.3A2.3 2.3 0 0 1 2.5 1z" fill="#fff"/><path d="M3.2 13.8c3.2 2.2 8 2.2 11.2 0" stroke="#5850f5" stroke-width="1.4" stroke-linecap="round"/></svg>
</body></html>
